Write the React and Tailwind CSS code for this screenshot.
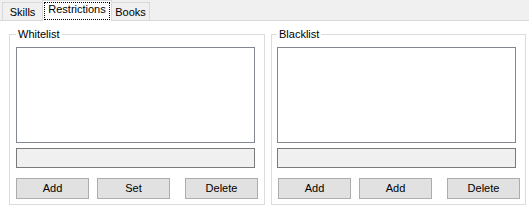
import React from "react";

function Btn({ children, className = "" }) {
  return (
    <div
      className={
        "w-[73px] h-[21px] shrink-0 bg-[#e1e1e1] border border-[#adadad] flex items-center justify-center leading-[13px] " +
        className
      }
    >
      {children}
    </div>
  );
}

function Group({ title, widthCls, padCls, rowCls, buttons }) {
  return (
    <fieldset
      className={
        "border border-[#dcdcdc] m-0 pr-0 pt-0 pb-[5px] " + widthCls + " " + padCls
      }
    >
      <legend className="px-[2px] leading-[13px] h-[13px]">{title}</legend>
      <div className="mt-[6px] w-[239px] h-[96px] bg-white border border-[#828790]" />
      <div className="mt-[5px] w-[239px] h-[20px] bg-[#f0f0f0] border border-[#7a7a7a]" />
      <div className={"mt-[10px] flex " + rowCls}>
        <Btn>{buttons[0]}</Btn>
        <Btn className={buttons[3]}>{buttons[1]}</Btn>
        <Btn className="ml-[15px]">{buttons[2]}</Btn>
      </div>
    </fieldset>
  );
}

export default function App() {
  return (
    <div className="w-[529px] h-[212px] bg-[#f0f0f0] flex flex-col font-['Liberation_Sans',Arial,sans-serif] text-[11px] text-black overflow-hidden">
      <div className="h-[20px] flex items-end pl-[2px] shrink-0">
        <div className="w-[41px] h-[18px] bg-[#f0f0f0] border border-b-0 border-[#d9d9d9] flex justify-center pt-[3px] leading-[13px]">
          Skills
        </div>
        <div className="relative z-10 -ml-px -mb-px w-[70px] h-[21px] bg-white border border-b-0 border-[#d9d9d9] px-px pt-px">
          <div className="h-[18px] border border-dotted border-black flex justify-center leading-[13px] pt-0">
            Restrictions
          </div>
        </div>
        <div className="-ml-px w-[39px] h-[18px] bg-[#f0f0f0] border border-b-0 border-[#d9d9d9] flex justify-center pt-[3px] leading-[13px]">
          Books
        </div>
      </div>
      <div className="flex-1 bg-white border-t border-[#d9d9d9] flex items-start pl-[9px] pt-[7px] gap-[6px]">
        <Group
          title="Whitelist"
          widthCls="w-[256px]"
          padCls="pl-[6px]"
          rowCls=""
          buttons={["Add", "Set", "Delete", "ml-[8px]"]}
        />
        <Group
          title="Blacklist"
          widthCls="w-[255px]"
          padCls="pl-[5px]"
          rowCls="ml-[1px]"
          buttons={["Add", "Add", "Delete", "ml-[8px]"]}
        />
      </div>
    </div>
  );
}
